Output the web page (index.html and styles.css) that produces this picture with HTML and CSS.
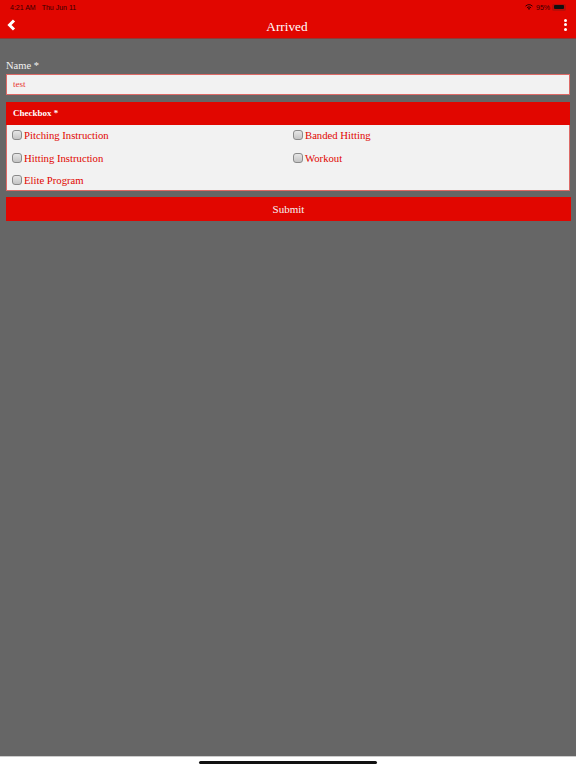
FILE: index.html
```html
<!DOCTYPE html>
<html lang="en">
<head>
    <meta charset="UTF-8">
    <meta name="viewport" content="width=device-width, initial-scale=1.0">
    <title>Arrived</title>
    <link rel="stylesheet" href="styles.css">
</head>
<body>
    <div class="app">
        <header class="top-bar">
            <div class="status-bar">
                <div class="status-time">
                    <span>4:21 AM</span>
                    <span>Thu Jun 11</span>
                </div>
                <div class="status-right">
                    <svg class="wifi" width="8" height="6" viewBox="0 0 16 12">
                        <path d="M8 12 L5.6 9 A4 4 0 0 1 10.4 9 Z" fill="#300"/>
                        <path d="M3.9 7.3 A6.6 6.6 0 0 1 12.1 7.3" fill="none" stroke="#300" stroke-width="2"/>
                        <path d="M1 4.3 A10.6 10.6 0 0 1 15 4.3" fill="none" stroke="#300" stroke-width="2"/>
                    </svg>
                    <span>95%</span>
                    <span class="battery"><span class="battery-level"></span></span>
                </div>
            </div>
            <div class="nav-bar">
                <svg class="back-icon" width="9" height="12" viewBox="0 0 9 12">
                    <path d="M7 1.5 L2.5 6 L7 10.5" fill="none" stroke="#fff" stroke-width="3"/>
                </svg>
                <div class="nav-title">Arrived</div>
                <div class="more-icon">
                    <span></span>
                    <span></span>
                    <span></span>
                </div>
            </div>
        </header>

        <main class="content">
            <form class="form">
                <label class="field-label" for="name">Name *</label>
                <input class="text-input" id="name" type="text" value="test">

                <div class="panel">
                    <div class="panel-head">Checkbox *</div>
                    <div class="panel-body">
                        <label class="check"><span class="check-box"></span>Pitching Instruction</label>
                        <label class="check"><span class="check-box"></span>Banded Hitting</label>
                        <label class="check"><span class="check-box"></span>Hitting Instruction</label>
                        <label class="check"><span class="check-box"></span>Workout</label>
                        <label class="check"><span class="check-box"></span>Elite Program</label>
                    </div>
                </div>

                <button class="submit-button" type="button">Submit</button>
            </form>
        </main>

        <footer class="home-area">
            <div class="home-indicator"></div>
        </footer>
    </div>
</body>
</html>
```

FILE: styles.css
```css
* {
    margin: 0;
    padding: 0;
    box-sizing: border-box;
}
body {
    font-family: "Liberation Serif", serif;
    background: #fff;
}
.app {
    width: 576px;
    height: 768px;
    display: flex;
    flex-direction: column;
}
.top-bar {
    height: 39px;
    background: #e10600;
    border-bottom: 1px solid #8f3a38;
}
.status-bar {
    height: 13px;
    padding: 1px 10px 0 10px;
    display: flex;
    justify-content: space-between;
    align-items: center;
    font-family: "Liberation Sans", sans-serif;
    font-size: 7px;
    color: #300;
}
.status-time {
    display: flex;
    gap: 6px;
}
.status-right {
    display: flex;
    align-items: center;
    gap: 2px;
}
.status-right .wifi {
    margin-right: 1px;
}
.battery {
    width: 14px;
    height: 7px;
    padding: 1.5px;
    border-radius: 2px;
    background: #b80d08;
}
.battery-level {
    display: block;
    width: 10px;
    height: 4px;
    border-radius: 1px;
    background: #111;
}
.nav-bar {
    height: 25px;
    padding: 0 9px 0 7px;
    display: flex;
    justify-content: space-between;
    align-items: center;
    color: #fff;
}
.nav-title {
    font-size: 13.3px;
    padding-top: 2px;
}
.more-icon {
    width: 9px;
    display: flex;
    flex-direction: column;
    align-items: flex-end;
    gap: 1.5px;
    padding-bottom: 2px;
}
.more-icon span {
    width: 3px;
    height: 3px;
    border-radius: 50%;
    background: #fff;
}
.back-icon {
    margin-bottom: 1px;
}
.content {
    flex: 1;
    background: #666;
    padding: 19px 5px 0 6px;
}
.form {
    display: flex;
    flex-direction: column;
}
.field-label {
    font-size: 10.5px;
    line-height: 15px;
    color: #f1f1f1;
}
.text-input {
    width: 564px;
    height: 21px;
    margin-top: 1px;
    padding: 0 6px 1px;
    border: 1px solid #dd6a67;
    background: #f2f2f2;
    color: #e8322d;
    font-family: "Liberation Serif", serif;
    font-size: 9px;
}
.text-input:focus {
    outline: none;
}
.panel {
    width: 564px;
    margin-top: 7px;
}
.panel-head {
    height: 23px;
    padding-left: 7px;
    padding-bottom: 1px;
    display: flex;
    align-items: center;
    background: #e10600;
    color: #fff;
    font-size: 9px;
    font-weight: bold;
}
.panel-body {
    height: 66px;
    padding: 0 1px;
    display: grid;
    grid-template-columns: 281px 1fr;
    grid-auto-rows: 22.5px;
    background: #f2f2f2;
    border: 1px solid #dd6a67;
    border-top: none;
}
.check {
    display: flex;
    align-items: center;
    gap: 2px;
    padding-left: 4px;
    padding-bottom: 2px;
    color: #e10600;
    font-size: 10.7px;
}
.check-box {
    width: 10px;
    height: 10px;
    border: 1px solid #8a8a8a;
    border-radius: 3px;
    background: linear-gradient(to bottom, #e6e6e6, #c4c4c4);
}
.submit-button {
    width: 565px;
    height: 24px;
    margin-top: 6px;
    border: none;
    background: #e10600;
    color: #f4f4f4;
    font-family: "Liberation Serif", serif;
    font-size: 11px;
}
.home-area {
    height: 12px;
    background: #fff;
    border-top: 1px solid #ccc;
    display: flex;
    justify-content: center;
    padding-top: 4px;
}
.home-indicator {
    width: 178px;
    height: 3px;
    border-radius: 2px;
    background: #111;
}
```
